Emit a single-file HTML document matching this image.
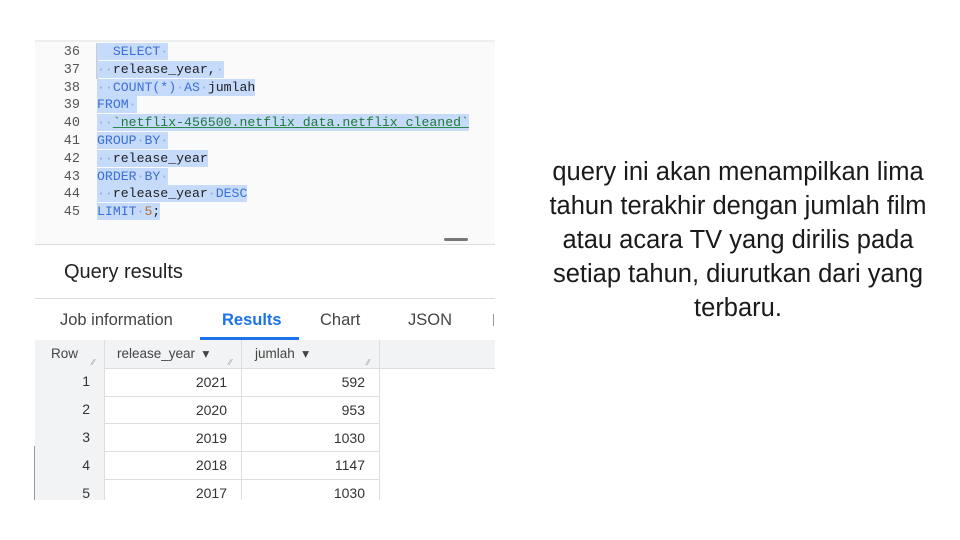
<!DOCTYPE html>
<html><head><meta charset="utf-8"><style>
body{margin:0;width:960px;height:540px;background:#fff;position:relative;overflow:hidden;font-family:"Liberation Sans",sans-serif}
.a{position:absolute}
.code{font-family:"Liberation Mono",monospace;font-size:13.2px;line-height:17.8px;white-space:pre}
.ln{color:#555;width:46px;text-align:right;left:34px;font-size:13.5px}
.hl{background:#c6dafa;display:inline-block;height:17px;vertical-align:top}
.k{color:#3c6fd6}
.d{color:#8aa8e0}
.s{color:#1e7a3a;text-decoration:underline;text-decoration-color:#2a8a4a}
.n{color:#b0703a}
.t{color:#202124}
.tab{font-size:16.5px;color:#444;top:311px}
.cell{position:absolute;font-size:14px;color:#333;text-align:right}
</style></head><body>
<div class="a" style="left:35px;top:40px;width:460px;height:205px;background:#fafafa"></div>
<div class="a" style="left:35px;top:40px;width:460px;height:2px;background:#eee"></div>
<div class="a code ln" style="top:44px">36
37
38
39
40
41
42
43
44
45</div>
<div class="a" style="left:96px;top:43px;width:2px;height:36px;background:#ccc"></div>
<div class="a" style="left:112px;top:45px;width:2px;height:15px;background:#222"></div>
<div class="a code" style="left:97px;top:43px"><span class="hl">  <span class="k">SELECT</span><span class="d">·</span></span>
<span class="hl"><span class="d">··</span><span class="t">release_year,</span><span class="d">·</span></span>
<span class="hl"><span class="d">··</span><span class="k">COUNT(*)</span><span class="d">·</span><span class="k">AS</span><span class="d">·</span><span class="t">jumlah</span></span>
<span class="hl"><span class="k">FROM</span><span class="d">·</span></span>
<span class="hl"><span class="d">··</span><span class="s">`netflix-456500.netflix_data.netflix_cleaned`</span></span>
<span class="hl"><span class="k">GROUP</span><span class="d">·</span><span class="k">BY</span><span class="d">·</span></span>
<span class="hl"><span class="d">··</span><span class="t">release_year</span></span>
<span class="hl"><span class="k">ORDER</span><span class="d">·</span><span class="k">BY</span><span class="d">·</span></span>
<span class="hl"><span class="d">··</span><span class="t">release_year</span><span class="d">·</span><span class="k">DESC</span></span>
<span class="hl"><span class="k">LIMIT</span><span class="d">·</span><span class="n">5</span><span class="t">;</span></span></div>
<div class="a" style="left:35px;top:244px;width:460px;height:1px;background:#ddd"></div>
<div class="a" style="left:444px;top:238px;width:24px;height:3px;background:#777;border-radius:2px"></div>
<div class="a" style="left:64px;top:261px;font-size:20px;color:#222">Query results</div>
<div class="a" style="left:35px;top:298px;width:460px;height:1px;background:#ddd"></div>
<div class="a tab" style="left:60px">Job information</div>
<div class="a tab" style="left:222px;color:#1a73e8;font-weight:bold">Results</div>
<div class="a tab" style="left:320px">Chart</div>
<div class="a tab" style="left:408px">JSON</div>
<div class="a" style="left:493px;top:314px;width:1px;height:12px;background:#999"></div>
<div class="a" style="left:200px;top:337px;width:99px;height:3px;background:#1a73e8"></div>
<div class="a" style="left:35px;top:340px;width:460px;height:28px;background:#f1f3f4;border-bottom:1px solid #ddd"></div>
<div class="a" style="left:35px;top:368px;width:69px;height:132px;background:#f1f3f4"></div>
<div class="a" style="left:104px;top:340px;width:1px;height:160px;background:#ddd"></div>
<div class="a" style="left:241px;top:340px;width:1px;height:160px;background:#ddd"></div>
<div class="a" style="left:379px;top:340px;width:1px;height:160px;background:#ddd"></div>
<div class="a" style="left:51px;top:346px;font-size:13.5px;color:#444">Row</div>
<div class="a" style="left:117px;top:346px;font-size:13.5px;color:#444">release_year &nbsp;▾</div>
<div class="a" style="left:255px;top:346px;font-size:13.5px;color:#444">jumlah &nbsp;▾</div>
<div class="a" style="left:92px;top:358px;font-size:8px;color:#999">⁄⁄</div>
<div class="a" style="left:229px;top:358px;font-size:8px;color:#999">⁄⁄</div>
<div class="a" style="left:367px;top:358px;font-size:8px;color:#999">⁄⁄</div>
<div class="a" style="left:104px;top:396px;width:276px;height:1px;background:#ddd"></div>
<div class="a" style="left:104px;top:423px;width:276px;height:1px;background:#ddd"></div>
<div class="a" style="left:104px;top:451px;width:276px;height:1px;background:#ddd"></div>
<div class="a" style="left:104px;top:479px;width:276px;height:1px;background:#ddd"></div>
<div class="cell" style="left:60px;width:30px;top:373px">1</div>
<div class="cell" style="left:60px;width:30px;top:401px">2</div>
<div class="cell" style="left:60px;width:30px;top:429px">3</div>
<div class="cell" style="left:60px;width:30px;top:457px">4</div>
<div class="cell" style="left:60px;width:30px;top:485px">5</div>
<div class="cell" style="left:150px;width:77px;top:374px">2021</div>
<div class="cell" style="left:150px;width:77px;top:402px">2020</div>
<div class="cell" style="left:150px;width:77px;top:430px">2019</div>
<div class="cell" style="left:150px;width:77px;top:457px">2018</div>
<div class="cell" style="left:150px;width:77px;top:485px">2017</div>
<div class="cell" style="left:290px;width:75px;top:374px">592</div>
<div class="cell" style="left:290px;width:75px;top:402px">953</div>
<div class="cell" style="left:290px;width:75px;top:430px">1030</div>
<div class="cell" style="left:290px;width:75px;top:457px">1147</div>
<div class="cell" style="left:290px;width:75px;top:485px">1030</div>
<div class="a" style="left:34px;top:446px;width:1px;height:54px;background:#999"></div>
<div class="a" style="left:518px;top:155px;width:440px;text-align:center;font-size:25.5px;line-height:34px;color:#1a1a1a">query ini akan menampilkan lima<br>tahun terakhir dengan jumlah film<br>atau acara TV yang dirilis pada<br>setiap tahun, diurutkan dari yang<br>terbaru.</div>
</body></html>
